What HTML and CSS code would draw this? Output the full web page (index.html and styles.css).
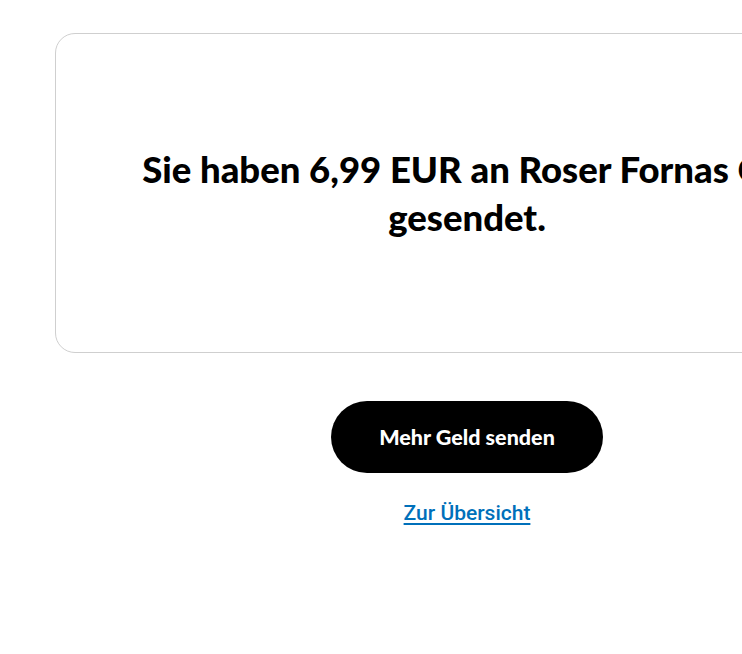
FILE: index.html
```html
<!DOCTYPE html>
<html lang="de">
<head>
<meta charset="utf-8">
<title>Gesendet</title>
<link rel="stylesheet" href="styles.css">
</head>
<body>
<main class="page">
  <section class="card">
    <h1 class="title">Sie haben 6,99 EUR an Roser Fornas Cid gesendet.</h1>
  </section>
  <div class="actions">
    <a class="btn" href="#">Mehr Geld senden</a>
    <a class="link" href="#">Zur Übersicht</a>
  </div>
</main>
</body>
</html>
```
FILE: styles.css
```css
html, body {
  margin: 0;
  padding: 0;
  background: #fff;
  overflow: hidden;
}
.page {
  width: 824px;
  margin-left: 55px;
  padding-top: 33px;
}
.card {
  box-sizing: border-box;
  height: 320px;
  border: 1px solid #cfcfcf;
  border-radius: 20px;
  display: flex;
  align-items: center;
  justify-content: center;
  padding: 0 80px;
}
.title {
  margin: 0;
  font-family: "Lato", sans-serif;
  font-weight: 900;
  font-size: 36.5px;
  line-height: 48px;
  text-align: center;
  color: #000;
}
.actions {
  display: flex;
  flex-direction: column;
  align-items: center;
  padding-top: 48px;
}
.btn {
  box-sizing: border-box;
  width: 272px;
  height: 72px;
  border-radius: 36px;
  background: #000;
  color: #fff;
  display: flex;
  align-items: center;
  justify-content: center;
  font-family: "Lato", sans-serif;
  font-weight: 900;
  font-size: 21.5px;
  text-decoration: none;
}
.link {
  margin-top: 28px;
  font-family: "Roboto", sans-serif;
  font-weight: 500;
  font-size: 21px;
  color: #0070ba;
  text-decoration: underline;
  text-underline-offset: 3px;
}
```
